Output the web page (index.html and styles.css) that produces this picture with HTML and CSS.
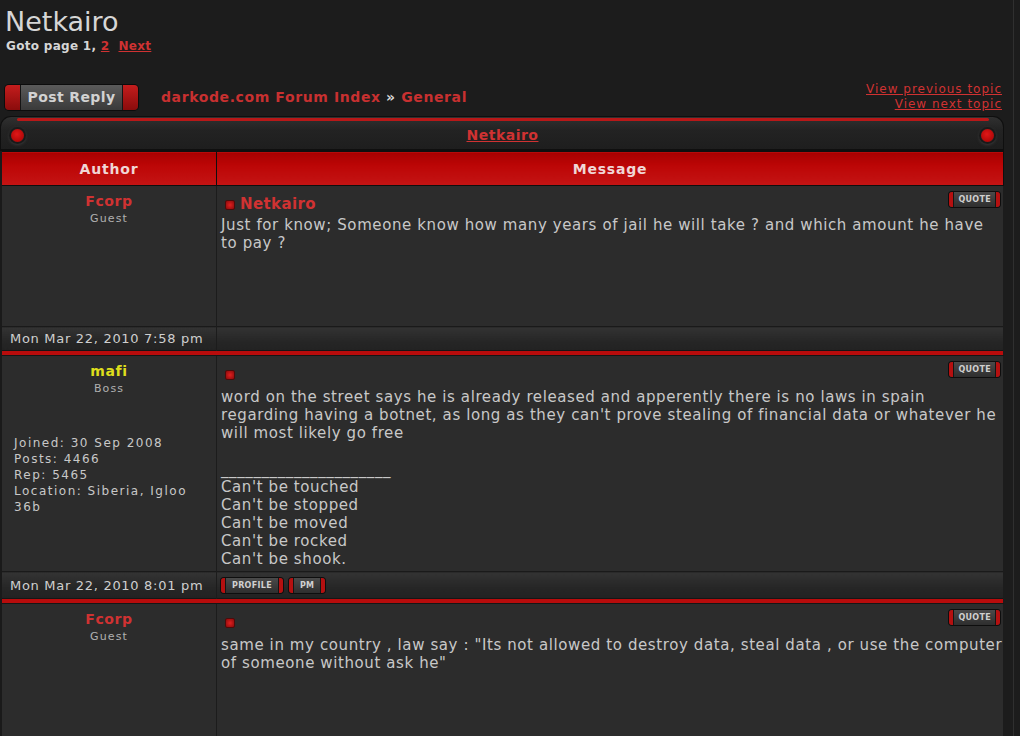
FILE: index.html
```html
<!DOCTYPE html>
<html lang="en">
<head>
    <meta charset="UTF-8">
    <title>Netkairo</title>
    <link rel="stylesheet" href="styles.css">
</head>
<body>
<div class="page">
    <h1 class="topic-title">Netkairo</h1>
    <div class="pages">Goto page <b>1</b>, <a href="#">2</a>&nbsp; <a href="#">Next</a></div>

    <div class="nav-row">
        <a class="btn-reply" href="#"><span class="cap"></span><span class="face">Post Reply</span><span class="cap"></span></a>
        <div class="crumbs"><a href="#">darkode.com Forum Index</a> <span class="raquo">&raquo;</span> <a href="#">General</a></div>
        <div class="topic-nav">
            <a href="#">View previous topic</a>
            <a href="#">View next topic</a>
        </div>
    </div>

    <div class="forum-box">
        <div class="box-title">
            <span class="dot"></span>
            <a href="#">Netkairo</a>
            <span class="dot"></span>
        </div>
        <table class="posts">
            <tr>
                <th class="col-author">Author</th>
                <th>Message</th>
            </tr>

            <!-- post 1 -->
            <tr class="post">
                <td class="author">
                    <div class="name">Fcorp</div>
                    <div class="rank">Guest</div>
                </td>
                <td class="message h1">
                    <div class="msg-head">
                        <span class="post-icon"></span><span class="subject">Netkairo</span>
                        <a class="mini-btn quote" href="#"><span>QUOTE</span></a>
                    </div>
                    <div class="body">Just for know; Someone know how many years of jail he will take ? and which amount he have to pay ?</div>
                </td>
            </tr>
            <tr class="post-foot">
                <td class="date">Mon Mar 22, 2010 7:58 pm</td>
                <td class="actions"></td>
            </tr>
            <tr class="sep"><td colspan="2"></td></tr>

            <!-- post 2 -->
            <tr class="post">
                <td class="author">
                    <div class="name boss">mafi</div>
                    <div class="rank">Boss</div>
                    <div class="details">
                        Joined: 30 Sep 2008<br>
                        Posts: 4466<br>
                        Rep: 5465<br>
                        Location: Siberia, Igloo 36b
                    </div>
                </td>
                <td class="message">
                    <div class="msg-head bare">
                        <span class="post-icon"></span>
                        <a class="mini-btn quote" href="#"><span>QUOTE</span></a>
                    </div>
                    <div class="body">word on the street says he is already released and apperently there is no laws in spain regarding having a botnet, as long as they can't prove stealing of financial data or whatever he will most likely go free<br><br>_____________________<br>Can't be touched<br>Can't be stopped<br>Can't be moved<br>Can't be rocked<br>Can't be shook.</div>
                </td>
            </tr>
            <tr class="post-foot tall">
                <td class="date">Mon Mar 22, 2010 8:01 pm</td>
                <td class="actions">
                    <div class="action-btns">
                        <a class="mini-btn" href="#"><span>PROFILE</span></a>
                        <a class="mini-btn" href="#"><span>PM</span></a>
                    </div>
                </td>
            </tr>
            <tr class="sep"><td colspan="2"></td></tr>

            <!-- post 3 -->
            <tr class="post">
                <td class="author">
                    <div class="name">Fcorp</div>
                    <div class="rank">Guest</div>
                </td>
                <td class="message h3">
                    <div class="msg-head bare">
                        <span class="post-icon"></span>
                        <a class="mini-btn quote" href="#"><span>QUOTE</span></a>
                    </div>
                    <div class="body">same in my country , law say : "Its not allowed to destroy data, steal data , or use the computer of someone without ask he"</div>
                </td>
            </tr>
        </table>
    </div>
</div>
</body>
</html>
```

FILE: styles.css
```css
body {
    margin: 0;
    background: #1c1c1c;
    color: #c8c8c8;
    font-family: "DejaVu Sans", Verdana, sans-serif;
}
a {
    color: #d03232;
}
.page {
    width: 1013px;
    min-height: 736px;
    border-right: 1px solid #2f2f2f;
}
.topic-title {
    margin: 0;
    padding: 6px 0 0 5px;
    font-size: 27px;
    font-weight: normal;
    line-height: 32px;
    color: #d6d6d6;
}
.pages {
    padding-left: 6px;
    font-size: 12px;
    font-weight: bold;
    line-height: 16px;
    color: #d6d6d6;
    letter-spacing: 0.3px;
}
.pages a {
    color: #d03232;
}
.nav-row {
    display: flex;
    align-items: center;
    margin-top: 24px;
    height: 38px;
    padding: 0 11px 0 5px;
}
.btn-reply {
    display: flex;
    height: 25px;
    text-decoration: none;
    border-radius: 4px;
    box-shadow: 0 0 0 1px #0c0c0c;
}
.btn-reply .cap {
    width: 15px;
    background: linear-gradient(#c41d1d, #8a0c0c);
}
.btn-reply .cap:first-child {
    border-radius: 4px 0 0 4px;
}
.btn-reply .cap:last-child {
    border-radius: 0 4px 4px 0;
}
.btn-reply .face {
    width: 101px;
    background: linear-gradient(#5a5a5a, #3a3a3a);
    border-left: 1px solid #151515;
    border-right: 1px solid #151515;
    color: #d2d2d2;
    font-size: 14px;
    font-weight: bold;
    line-height: 25px;
    text-align: center;
    letter-spacing: 0.4px;
}
.crumbs {
    margin-left: 23px;
    font-size: 14px;
    font-weight: bold;
    letter-spacing: 0.6px;
    color: #d8d8d8;
}
.crumbs a {
    text-decoration: none;
    color: #c83030;
}
.topic-nav {
    margin-left: auto;
    display: flex;
    flex-direction: column;
    align-items: flex-end;
    font-size: 12px;
    line-height: 15px;
    letter-spacing: 1px;
}
.forum-box {
    width: 1004px;
}
.box-title {
    display: flex;
    align-items: center;
    justify-content: space-between;
    height: 32px;
    padding: 0 9px 0 10px;
    border: 1px solid #0f0f0f;
    border-bottom: 2px solid #0f0f0f;
    border-radius: 11px 11px 0 0;
    background: linear-gradient(#303030, #232323 40%, #1e1e1e);
    position: relative;
}
.box-title::before {
    content: "";
    position: absolute;
    left: 16px;
    right: 14px;
    top: 1px;
    height: 3px;
    border-radius: 2px;
    background: #b81818;
}
.box-title a {
    font-size: 14px;
    font-weight: bold;
    letter-spacing: 0.5px;
    margin-top: 4px;
}
.dot {
    width: 13px;
    height: 13px;
    margin-top: 4px;
    border-radius: 50%;
    background: radial-gradient(circle at 45% 40%, #e01818, #b20808 70%);
    box-shadow: 0 0 0 2px #1a1a1a, 0 1px 3px 2px #3a3a3a;
}
.posts {
    width: 100%;
    border-collapse: collapse;
    background: #2c2c2c;
}
.posts th {
    height: 33px;
    padding: 0;
    background: linear-gradient(#a80000, #bc0606 40%, #c41414);
    border: 1px solid #0f0f0f;
    border-left-color: #7a0606;
    color: #f0d6d6;
    font-size: 14px;
    letter-spacing: 0.8px;
}
.posts th.col-author {
    width: 214px;
    border-left: 2px solid #1a1a1a;
}
.posts td {
    border-left: 1px solid #1c1c1c;
    border-right: 1px solid #1c1c1c;
    vertical-align: top;
    padding: 0;
}
.posts td:first-child {
    border-left: 2px solid #1a1a1a;
}
.author {
    text-align: center;
    padding-top: 7px !important;
}
.name {
    font-size: 14px;
    font-weight: bold;
    letter-spacing: 0.6px;
    color: #d03232;
    line-height: 17px;
}
.name.boss {
    color: #dede1c;
}
.rank {
    font-size: 11px;
    letter-spacing: 1.1px;
    color: #b0b0b0;
    line-height: 18px;
}
.details {
    text-align: left;
    padding: 37px 4px 0 12px;
    font-size: 12px;
    line-height: 16px;
    letter-spacing: 1.5px;
    color: #c8c8c8;
}
.message {
    padding: 6px 0 3px 4px !important;
}
.message.h1 {
    height: 131px;
}
.message.h3 {
    height: 128px;
}
.msg-head {
    display: flex;
    align-items: center;
    height: 24px;
}
.msg-head.bare {
    height: 26px;
}
.post-icon {
    width: 8px;
    height: 8px;
    margin: 2px 5px 0 4px;
    background: radial-gradient(#e02020, #8a0a0a);
    border: 1px solid #4a0c0c;
    border-radius: 2px;
}
.bare .post-icon {
    margin-top: 0;
}
.subject {
    font-size: 15px;
    font-weight: bold;
    color: #d03232;
    letter-spacing: 0.4px;
}
.body {
    font-size: 15px;
    line-height: 18px;
    color: #c8c8c8;
    letter-spacing: 0.6px;
}
.mini-btn {
    display: inline-flex;
    height: 15px;
    padding: 0 5px;
    border-radius: 3px;
    background: linear-gradient(90deg, #b51010 4px, #151515 4px, #151515 5px, transparent 5px),
                linear-gradient(270deg, #b51010 4px, #151515 4px, #151515 5px, transparent 5px),
                linear-gradient(#4a4a4a, #2e2e2e);
    box-shadow: 0 0 0 1px #0e0e0e;
    text-decoration: none;
}
.mini-btn span {
    padding: 0 6px;
    font-size: 8px;
    font-weight: bold;
    line-height: 15px;
    color: #d0d0d0;
    letter-spacing: 0.3px;
}
.mini-btn.quote {
    margin-left: auto;
    margin-top: -9px;
    margin-right: 3px;
}
.bare .mini-btn.quote {
    margin-top: -11px;
}
.mini-btn.quote span {
    padding: 0 4px;
}
.post-foot td {
    height: 23px;
    border-top: 1px solid #1a1a1a;
    background: linear-gradient(#333333, #262626 60%, #222222);
    vertical-align: middle;
}
.post-foot.tall td {
    height: 26px;
}
.date {
    padding-left: 8px !important;
    font-size: 13px;
    letter-spacing: 0.7px;
    color: #cfcfcf;
}
.actions {
    padding-left: 4px !important;
}
.action-btns {
    display: flex;
    gap: 6px;
}
.sep td {
    height: 4px;
    padding: 0;
    background: #b80c0c;
    border-top: 1px solid #161616;
    border-bottom: 1px solid #161616;
}
```
